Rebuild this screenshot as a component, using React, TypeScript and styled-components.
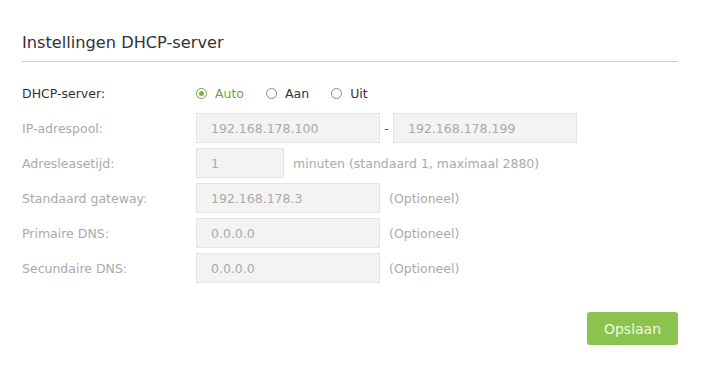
import React from "react";
import styled, { createGlobalStyle } from "styled-components";

const Global = createGlobalStyle`
  html, body { margin: 0; padding: 0; background: #fff; }
  body { font-family: "DejaVu Sans", Verdana, sans-serif; }
`;

const Page = styled.div`
  width: 719px;
  height: 369px;
  padding: 0 41px 0 22px;
  box-sizing: border-box;
  display: flex;
  flex-direction: column;
`;

const Title = styled.h2`
  margin: 0;
  padding-top: 32px;
  font-size: 16.2px;
  font-weight: normal;
  color: #333;
  line-height: 22px;
  padding-bottom: 7px;
  border-bottom: 1px solid #cfcfcf;
`;

const Form = styled.div`
  display: flex;
  flex-direction: column;
  gap: 5px;
  margin-top: 16px;
`;

const Row = styled.div`
  display: flex;
  align-items: center;
  height: 30px;
`;

const Label = styled.div<{ $active?: boolean }>`
  width: 174px;
  flex: none;
  font-size: 12.5px;
  color: ${(p) => (p.$active ? "#333" : "#aaa")};
`;

const Radios = styled.div`
  display: flex;
  align-items: center;
  gap: 22px;
`;

const RadioItem = styled.label<{ $checked?: boolean }>`
  display: flex;
  align-items: center;
  gap: 8px;
  font-size: 12.5px;
  color: ${(p) => (p.$checked ? "#6aa834" : "#333")};
`;

const Circle = styled.span<{ $checked?: boolean }>`
  width: 11px;
  height: 11px;
  box-sizing: border-box;
  border-radius: 50%;
  border: 1px solid ${(p) => (p.$checked ? "#6aa834" : "#888")};
  display: flex;
  align-items: center;
  justify-content: center;
  &::after {
    content: "";
    width: 5px;
    height: 5px;
    border-radius: 50%;
    background: ${(p) => (p.$checked ? "#7cb342" : "transparent")};
  }
`;

const Input = styled.div<{ $w: number }>`
  width: ${(p) => p.$w}px;
  height: 30px;
  box-sizing: border-box;
  background: #f3f3f3;
  border: 1px solid #e4e4e4;
  padding-left: 14px;
  display: flex;
  align-items: center;
  font-size: 12.5px;
  color: #aaa;
`;

const Dash = styled.span`
  width: 13px;
  text-align: center;
  font-size: 12.5px;
  color: #555;
`;

const Hint = styled.span`
  margin-left: 9px;
  font-size: 12.5px;
  color: #aaa;
`;

const Footer = styled.div`
  display: flex;
  justify-content: flex-end;
  margin-top: 29px;
`;

const Button = styled.button`
  width: 91px;
  height: 33px;
  border: none;
  border-radius: 3px;
  background: #8cc34e;
  color: #f1f8e4;
  font-family: "DejaVu Sans", Verdana, sans-serif;
  font-size: 14px;
  padding: 0;
`;

const Radio = ({ label, checked }: { label: string; checked?: boolean }) => (
  <RadioItem $checked={checked}>
    <Circle $checked={checked} />
    {label}
  </RadioItem>
);

export default function App() {
  return (
    <>
      <Global />
      <Page>
        <Title>Instellingen DHCP-server</Title>
        <Form>
          <Row>
            <Label $active>DHCP-server:</Label>
            <Radios>
              <Radio label="Auto" checked />
              <Radio label="Aan" />
              <Radio label="Uit" />
            </Radios>
          </Row>
          <Row>
            <Label>IP-adrespool:</Label>
            <Input $w={184}>192.168.178.100</Input>
            <Dash>-</Dash>
            <Input $w={184}>192.168.178.199</Input>
          </Row>
          <Row>
            <Label>Adresleasetijd:</Label>
            <Input $w={88}>1</Input>
            <Hint>minuten (standaard 1, maximaal 2880)</Hint>
          </Row>
          <Row>
            <Label>Standaard gateway:</Label>
            <Input $w={184}>192.168.178.3</Input>
            <Hint>(Optioneel)</Hint>
          </Row>
          <Row>
            <Label>Primaire DNS:</Label>
            <Input $w={184}>0.0.0.0</Input>
            <Hint>(Optioneel)</Hint>
          </Row>
          <Row>
            <Label>Secundaire DNS:</Label>
            <Input $w={184}>0.0.0.0</Input>
            <Hint>(Optioneel)</Hint>
          </Row>
        </Form>
        <Footer>
          <Button>Opslaan</Button>
        </Footer>
      </Page>
    </>
  );
}
